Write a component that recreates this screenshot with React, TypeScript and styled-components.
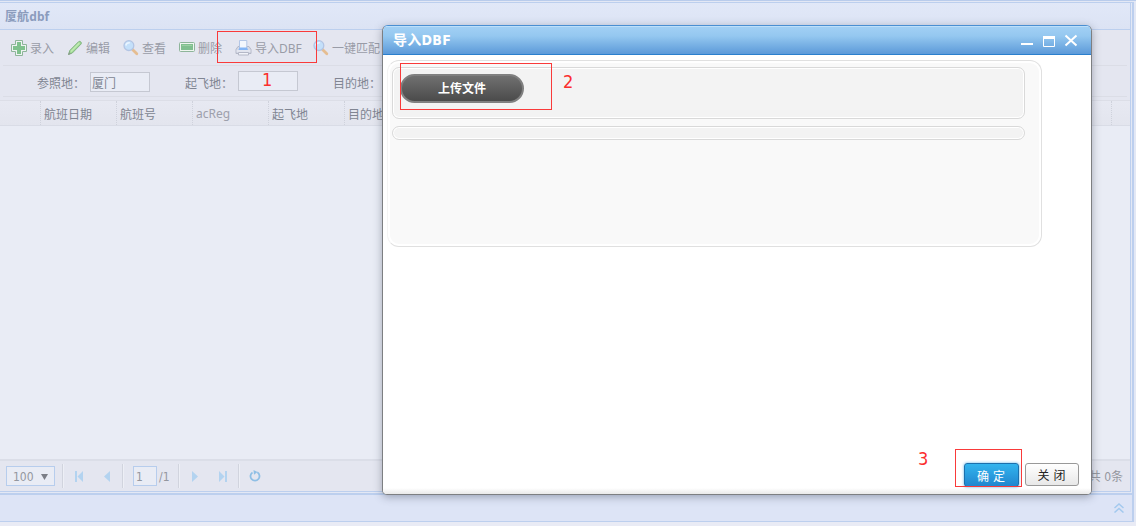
import React from "react";
import styled, { createGlobalStyle } from "styled-components";

const Global = createGlobalStyle`
  * { box-sizing: border-box; }
  body { margin: 0; background: #e9ebf4; font: 12px/16px "Noto Sans", "Noto Sans CJK SC", sans-serif; }
  #root { overflow: hidden; height: 526px; }
`;

const Page = styled.div`
  position: relative;
  width: 1136px;
  height: 526px;
  padding-top: 2px;
  background: #e3e8f5;
  color: #808592;
  border-top: 1px solid #b9ccec;
`;
const Shell = styled.div`
  width: 1134px;
  height: 493px;
  margin-top: -1px;
  border-top: 1px solid #bccfee;
  border-right: 2px solid #bccfee;
  border-bottom: 2px solid #bccfee;
  padding: 0 1px 1px 0;
`;
const Panel = styled.div`
  height: 100%;
  display: flex;
  flex-direction: column;
  border-right: 1px solid #bccfee;
  border-bottom: 1px solid #bccfee;
  background: #e9ecf5;
`;
const PanelTitle = styled.div`
  height: 27px;
  flex: none;
  padding: 6px 5px 4px;
  font-weight: 700;
  letter-spacing: 0.1px;
  color: #8b9cbd;
  background: linear-gradient(#e1e8f8, #dce3f4);
  border-bottom: 1px solid #bccfee;
`;
const Toolbar = styled.div`
  display: flex;
  align-items: center;
  gap: 13px;
  height: 36px;
  flex: none;
  margin: 0 3px;
  padding-left: 8px;
  border-bottom: 1px solid #dbdde6;
  color: #999ca7;
`;
const ToolItem = styled.div<{ $w?: number }>`
  display: flex;
  align-items: center;
  gap: 3px;
  width: ${(p) => p.$w ?? 43}px;
  white-space: nowrap;
  svg { flex: none; }
  span { padding-top: 2px; }
`;
const Tools = styled.div`
  flex: none;
  background: #e4e6f0;
`;
const Filters = styled.div`
  display: flex;
  height: 31px;
  margin: 0 3px;
  padding-left: 34px;
  border-bottom: 1px solid #dbdde6;
`;
const Field = styled.div<{ $lift?: number }>`
  display: flex;
  width: 148px;
  padding-top: ${(p) => 6 - (p.$lift ?? 0)}px;
  label { width: 53px; padding-top: ${(p) => 4 + (p.$lift ?? 0)}px; white-space: nowrap; }
`;
const Input = styled.div`
  width: 60px;
  height: 20px;
  border: 1px solid #c5c8d2;
  background: #e9ecf5;
  padding: 3px 1px;
`;
const GridHead = styled.div`
  display: flex;
  height: 26px;
  margin-top: 3px;
  border-top: 1px solid #dcdee7;
  border-bottom: 1px solid #d9dce6;
  background: linear-gradient(#e7e9f2, #e3e5ee);
`;
const HeadCell = styled.div<{ $w?: number; $soft?: boolean }>`
  width: ${(p) => p.$w ?? 76}px;
  padding: ${(p) => (p.$soft ? 5 : 6)}px 3px 0;
  border-right: 1px dotted #cfd2dc;
  white-space: nowrap;
  overflow: hidden;
  color: ${(p) => (p.$soft ? "#9da0ac" : "inherit")};
`;
const GridBody = styled.div`
  flex: 1;
`;
const Pager = styled.div`
  display: flex;
  align-items: center;
  height: 32px;
  flex: none;
  padding: 0 7px 0 6px;
  background: #e4e6f0;
  border-top: 2px solid #dbdee8;
  color: #94979f;
  font-family: "DejaVu Sans Condensed", "DejaVu Sans", "Noto Sans CJK SC", sans-serif;
  font-stretch: condensed;
`;
const Select = styled.div`
  display: flex;
  justify-content: space-between;
  align-items: center;
  width: 49px;
  height: 20px;
  padding: 1px 6px 0;
  border: 1px solid #b7cded;
  background: #e9ecf5;
`;
const Divider = styled.i<{ $l: number; $r: number }>`
  width: 2px;
  height: 24px;
  flex: none;
  margin: 0 ${(p) => p.$r}px 0 ${(p) => p.$l}px;
  border-left: 1px solid #d1d4de;
  border-right: 1px solid #edeff6;
`;
const NavIcon = styled.svg<{ $r?: number }>`
  flex: none;
  display: block;
  margin-right: ${(p) => p.$r ?? 0}px;
`;
const PageInput = styled.div`
  width: 24px;
  height: 20px;
  padding: 2px 2px;
  border: 1px solid #b7cded;
  background: #e9ecf5;
  margin-right: 2px;
`;
const PageCount = styled.span`
  width: 19px;
  padding-top: 1px;
`;
const Total = styled.span`
  margin-left: auto;
  padding-top: 1px;
`;
const Footer = styled.div`
  display: flex;
  justify-content: flex-end;
  align-items: center;
  width: 1134px;
  height: 27px;
  padding-right: 8px;
  background: #dde4f6;
  border-right: 2px solid #bccfee;
  border-bottom: 1px solid #bccfee;
`;
const Below = styled.div`
  height: 4px;
  background: #e9ebf5;
`;

const Dialog = styled.section`
  position: absolute;
  left: 382px;
  top: 24px;
  width: 710px;
  height: 470px;
  display: flex;
  flex-direction: column;
  border: 1px solid #7d7f82;
  border-top-color: #4a8fd2;
  border-radius: 6px 6px 5px 5px;
  background: #fff;
  box-shadow: 0 2px 9px rgba(60, 70, 90, 0.42);
  overflow: hidden;
`;
const DialogTitle = styled.header`
  display: flex;
  align-items: center;
  justify-content: space-between;
  height: 29px;
  flex: none;
  padding: 0 13px 0 10px;
  color: #fff;
  font: 700 14px/16px "DejaVu Sans Condensed", "DejaVu Sans", "Noto Sans CJK SC", sans-serif;
  font-stretch: condensed;
  background: linear-gradient(#a2d0f5, #95c8f0 35%, #5c9ad9);
  border-bottom: 1px solid #2a7fcd;
  box-shadow: inset 0 1px #bddffa;
  letter-spacing: 0.3px;
  svg { margin-top: 2px; }
`;
const DialogBody = styled.div`
  flex: 1;
  padding: 5px 4px;
`;
const UploadArea = styled.div`
  width: 655px;
  height: 187px;
  padding: 5px 15px 0 4px;
  border: 1px solid #e0e0e0;
  border-left-color: #f4f4f4;
  border-radius: 12px;
  background: #f9f9f9;
  box-shadow: inset 0 0 0 2px #fff;
`;
const Box = styled.div<{ $h: number }>`
  width: 633px;
  height: ${(p) => p.$h}px;
  margin: 1px 0 7px;
  padding: 6px 7px;
  border: 1px solid #d9d9d9;
  border-radius: 7px;
  background: #f3f3f3;
  box-shadow: inset 0 0 0 1px #fff;
`;
const UploadButton = styled.button`
  display: block;
  width: 124px;
  height: 29px;
  padding: 0;
  border: 2px solid #808080;
  border-radius: 15px;
  background: linear-gradient(#707070, #4b4b4b);
  color: #fff;
  font: 700 12px/26px "Noto Sans", "Noto Sans CJK SC", sans-serif;
`;
const Actions = styled.footer`
  display: flex;
  justify-content: flex-end;
  gap: 5px;
  height: 37px;
  flex: none;
  padding: 6px 12px 0 0;
  background: linear-gradient(#fff 31px, #e9e9e9);
`;
const Button = styled.button<{ $primary?: boolean }>`
  width: ${(p) => (p.$primary ? 55 : 54)}px;
  height: ${(p) => (p.$primary ? 24 : 23)}px;
  margin-right: ${(p) => (p.$primary ? 1 : 0)}px;
  padding: 3px 1px 0 0;
  border: 1px solid ${(p) => (p.$primary ? "#1b70ad" : "#999")};
  border-radius: 3px;
  background: ${(p) => (p.$primary ? "linear-gradient(#32b4ee, #2186cf)" : "linear-gradient(#fff, #e8e8e8)")};
  box-shadow: ${(p) => (p.$primary ? "0 0 3px #58b2e8" : "none")};
  color: ${(p) => (p.$primary ? "#fff" : "#222")};
  font: 12px/18px "Noto Sans", "Noto Sans CJK SC", sans-serif;
  word-spacing: 1px;
`;
const Mark = styled.div<{ $x: number; $y: number; $w: number; $h: number }>`
  position: absolute;
  left: ${(p) => p.$x}px;
  top: ${(p) => p.$y - 1}px;
  width: ${(p) => p.$w}px;
  height: ${(p) => p.$h}px;
  border: 1px solid #f93a3a;
`;
const Step = styled.div<{ $x: number; $y: number }>`
  position: absolute;
  left: ${(p) => p.$x}px;
  top: ${(p) => p.$y - 1}px;
  color: #fb2e2e;
  font: condensed 18px/20px "DejaVu Sans Condensed", "DejaVu Sans", sans-serif;
`;

const AddIcon = () => (
  <svg width="16" height="16" viewBox="0 0 16 16">
    <path d="M4.500 .5h7v4h4v7h-4v4h-7v-4h-4v-7h4z" fill="#eef3f2" stroke="#8eb59a" strokeLinejoin="round" />
    <path d="M6 2h4v4h4v4h-4v4H6v-4H2V6h4z" fill="#7fc18d" />
  </svg>
);
const PencilIcon = () => (
  <svg width="16" height="16" viewBox="0 0 16 16">
    <path d="M1.500 14.500l1.300-4L11.600 1.700q1.200-.8 2.200.2t.2 2.200L5.300 13z" fill="#a3dc98" stroke="#7fb37f" />
    <path d="M4 11.500L12.300 3" stroke="#c4ecb5" strokeWidth="1.100" />
    <path d="M1 15l1.200-3 1.800 1.800z" fill="#8c9a8e" />
  </svg>
);
const SearchIcon = () => (
  <svg width="16" height="16" viewBox="0 0 16 16">
    <path d="M9.500 9.500l4.300 4.200" stroke="#e5bd91" strokeWidth="2.800" strokeLinecap="round" />
    <circle cx="5.900" cy="5.600" r="4.900" fill="#c4e0fa" stroke="#b3c5e4" strokeWidth="1.300" />
    <path d="M2.800 5.500q.6-3 4-2.800" stroke="#eaf5ff" strokeWidth="1.600" fill="none" />
  </svg>
);
const RemoveIcon = () => (
  <svg width="16" height="16" viewBox="0 0 16 16">
    <rect x=".5" y="2.500" width="15" height="9" rx="1" fill="#eef5ef" stroke="#8eb59a" />
    <rect x="2" y="4" width="12" height="6" fill="#80bf8f" />
    <path d="M3 5.500h10" stroke="#9bd0a3" />
  </svg>
);
const PrinterIcon = () => (
  <svg width="17" height="16" viewBox="0 0 17 16">
    <path d="M3 6.500h11l2 3v4H1v-4z" fill="#d5d9e6" stroke="#b4b8c7" strokeLinejoin="round" />
    <path d="M4.500 8V.5h7.300V8" fill="#f3f7fd" stroke="#b3c6e6" />
    <path d="M4.500 7.500h7.500l1 2.500H3.500z" fill="#84b5f5" />
    <path d="M1.500 11h14" stroke="#f0f2f8" />
    <path d="M3.500 12.500h10v2.500h-10z" fill="#f2f4fa" stroke="#b4b8c7" />
  </svg>
);

const tools = [
  { label: "录入", icon: <AddIcon /> },
  { label: "编辑", icon: <PencilIcon /> },
  { label: "查看", icon: <SearchIcon /> },
  { label: "删除", icon: <RemoveIcon /> },
  { label: "导入DBF", icon: <PrinterIcon />, width: 65 },
  { label: "一键匹配", icon: <SearchIcon />, width: 67 },
];

const Chevron = ({ d, w, r }: { d: string; w: number; r?: number }) => (
  <NavIcon width={w} height="11" viewBox={`0 0 ${w} 11`} $r={r}>
    <path d={d} fill="#b3d3f0" />
  </NavIcon>
);

export default function App() {
  return (
    <>
      <Global />
      <Page>
        <Shell>
          <Panel>
            <PanelTitle>厦航dbf</PanelTitle>
            <Tools>
              <Toolbar>
                {tools.map((t) => (
                  <ToolItem key={t.label} $w={t.width}>{t.icon}<span>{t.label}</span></ToolItem>
                ))}
              </Toolbar>
              <Filters>
                <Field><label>参照地：</label><Input>厦门</Input></Field>
                <Field $lift={1}><label>起飞地：</label><Input /></Field>
                <Field><label>目的地：</label></Field>
              </Filters>
              <GridHead>
                <HeadCell $w={41} />
                <HeadCell>航班日期</HeadCell>
                <HeadCell>航班号</HeadCell>
                <HeadCell $soft>acReg</HeadCell>
                <HeadCell>起飞地</HeadCell>
                <HeadCell $w={767}>目的地</HeadCell>
              </GridHead>
            </Tools>
            <GridBody />
            <Pager>
              <Select>100<svg width="7" height="6" viewBox="0 0 7 6"><path d="M0 0h7L3.500 6z" fill="#7b7e87" /></svg></Select>
              <Divider $l={7} $r={11} />
              <Chevron w={8} d="M0 0h2v11H0zM8 0v11L2.500 5.500z" r={21} />
              <Chevron w={6} d="M6 0v11L0 5.500z" />
              <Divider $l={12} $r={9} />
              <PageInput>1</PageInput><PageCount>/1</PageCount>
              <Divider $l={0} $r={12} />
              <Chevron w={6} d="M0 0v11l6-5.500z" r={21} />
              <Chevron w={8} d="M0 0v11l5.500-5.500zM6 0h2v11H6z" />
              <Divider $l={11} $r={9} />
              <NavIcon width="12" height="12" viewBox="0 0 12 12">
                <path d="M8.300 2.300a4.500 4.500 0 1 1-4.800.1" fill="none" stroke="#8fbfe5" strokeWidth="1.800" />
                <path d="M4.500 0l4 2-3.500 2.800z" fill="#8fbfe5" />
              </NavIcon>
              <Total>共 0条</Total>
            </Pager>
          </Panel>
        </Shell>
        <Footer>
          <svg width="10" height="10" viewBox="0 0 10 10" fill="none" stroke="#a3c9ee" strokeWidth="1.500">
            <path d="M.5 5L5 1l4.500 4M.5 9.500L5 5.500l4.500 4" />
          </svg>
        </Footer>
        <Below />
        <Mark $x={217} $y={31} $w={100} $h={32} />
        <Step $x={262} $y={70}>1</Step>
        <Dialog>
          <DialogTitle>
            导入DBF
            <svg width="58" height="14" viewBox="0 0 58 14" fill="none" stroke="#fff">
              <path d="M1 10h12" strokeWidth="2" />
              <path d="M23.500 4v8.500h11V4" />
              <path d="M23 3.500h12" strokeWidth="3" />
              <path d="M45.500 1.500l11 10M56.500 1.500l-11 10" strokeWidth="2" />
            </svg>
          </DialogTitle>
          <DialogBody>
            <UploadArea>
              <Box $h={52}><UploadButton>上传文件</UploadButton></Box>
              <Box $h={14} />
            </UploadArea>
          </DialogBody>
          <Actions>
            <Button $primary>确 定</Button>
            <Button>关 闭</Button>
          </Actions>
        </Dialog>
        <Mark $x={400} $y={63} $w={152} $h={47} />
        <Step $x={563} $y={72}>2</Step>
        <Mark $x={955} $y={449} $w={67} $h={38} />
        <Step $x={918} $y={449}>3</Step>
      </Page>
    </>
  );
}
